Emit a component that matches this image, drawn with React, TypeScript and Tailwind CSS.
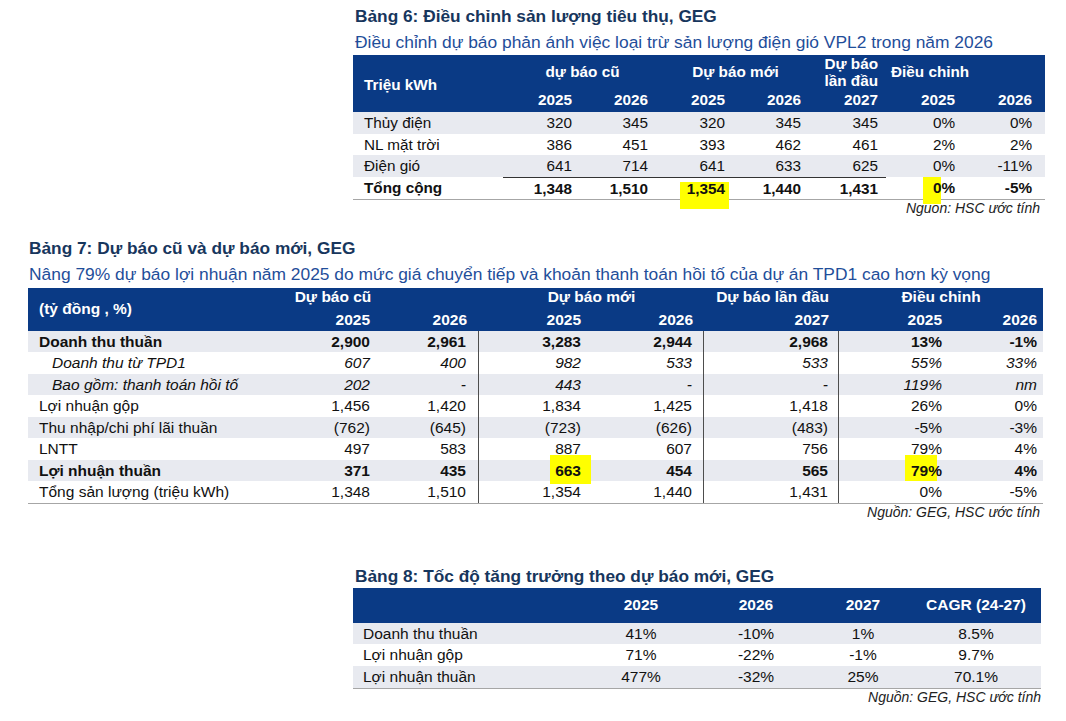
const FONT = "font-['Liberation_Sans',Arial,sans-serif]";
const NAVY = "bg-[#0a3a85]";

type Hl = { col: number; cls: string };
type Row = {
  label: string;
  vals: string[];
  shade?: boolean;
  bold?: boolean;
  italic?: boolean;
  hl?: Hl[];
};

// ---------- Bảng 6 ----------
const t6Grid = "grid grid-cols-[150px_77px_76px_77px_76px_77px_77px_82px]";
const t6Pads = ["pr-2", "pr-2", "pr-2", "pr-2", "pr-2", "pr-2", "pr-[13px]"];

const t6Rows: Row[] = [
  { label: "Thủy điện", vals: ["320", "345", "320", "345", "345", "0%", "0%"], shade: true },
  { label: "NL mặt trời", vals: ["386", "451", "393", "462", "461", "2%", "2%"] },
  { label: "Điện gió", vals: ["641", "714", "641", "633", "625", "0%", "-11%"], shade: true },
];

function Table6() {
  return (
    <div className="ml-[353px] w-[692px] pt-[6px]">
      <div className="pl-[2px] text-[17.3px] font-bold leading-5 text-[#17365d]">
        Bảng 6: Điều chỉnh sản lượng tiêu thụ, GEG
      </div>
      <div className="mt-[6px] pl-[2px] text-[17.4px] leading-5 text-[#1f4e9a]">
        Điều chỉnh dự báo phản ánh việc loại trừ sản lượng điện gió VPL2 trong năm 2026
      </div>

      <div className={`${t6Grid} mt-[3px] h-[57px] grid-rows-[34px_23px] ${NAVY} text-[15.3px] font-bold text-white`}>
        <div className="row-span-2 flex items-center pl-[11px] pt-[3px]">Triệu kWh</div>
        <div className="col-span-2 flex items-center justify-center pl-[6px]">dự báo cũ</div>
        <div className="col-span-2 flex items-center justify-center pl-[6px]">Dự báo mới</div>
        <div className="flex items-center justify-end pr-2 text-right leading-[17px]">
          Dự báo
          <br />
          lần đầu
        </div>
        <div className="col-span-2 flex items-center pl-[5px]">Điều chỉnh</div>
        {["2025", "2026", "2025", "2026", "2027", "2025", "2026"].map((y, i) => (
          <div key={i} className={`flex items-center justify-end ${t6Pads[i]}`}>
            {y}
          </div>
        ))}
      </div>

      {t6Rows.map((r) => (
        <div key={r.label} className={`${t6Grid} h-[21.5px] text-[15.3px] leading-[21.5px] ${r.shade ? "bg-[#e8eaf0]" : ""}`}>
          <div className="pl-[11px]">{r.label}</div>
          {r.vals.map((v, i) => (
            <div key={i} className={`text-right ${t6Pads[i]}`}>
              {v}
            </div>
          ))}
        </div>
      ))}

      {/* total row */}
      <div className={`${t6Grid} h-[23px] border-b border-[#a6a6a6] text-[15.3px] font-bold leading-[22px]`}>
        <div className="pl-[11px]">Tổng cộng</div>
        <div className="border-t border-[#333] pr-2 text-right">1,348</div>
        <div className="border-t border-[#333] pr-2 text-right">1,510</div>
        <div className="relative border-t border-[#333] pr-2 text-right">
          <div className="absolute left-[24px] top-[4px] h-[27px] w-[49px] bg-[#ffff00]" />
          <span className="relative">1,354</span>
        </div>
        <div className="border-t border-[#333] pr-2 text-right">1,440</div>
        <div className="border-t border-[#333] pr-2 text-right">1,431</div>
        <div className="relative pr-2 text-right">
          <div className="absolute left-[37px] top-0 h-[27px] w-[18px] bg-[#ffff00]" />
          <span className="relative">0%</span>
        </div>
        <div className="pr-[13px] text-right">-5%</div>
      </div>

      <div className="pr-[5px] text-right text-[14px] italic leading-4 text-[#222]">Nguồn: HSC ước tính</div>
    </div>
  );
}

// ---------- Bảng 7 ----------
const t7Grid = "grid grid-cols-[260px_90px_101px_111px_114px_135px_111px_93px]";
const t7Pads = ["pr-2", "pr-[12px]", "pr-[9px]", "pr-[11px]", "pr-[10px]", "pr-2", "pr-[6px]"];
const t7Lines = ["", "border-r border-[#4d4d4d]", "", "border-r border-[#4d4d4d]", "border-r border-[#4d4d4d]", "", ""];

const t7Rows: Row[] = [
  { label: "Doanh thu thuần", vals: ["2,900", "2,961", "3,283", "2,944", "2,968", "13%", "-1%"], shade: true, bold: true },
  { label: "Doanh thu từ TPD1", vals: ["607", "400", "982", "533", "533", "55%", "33%"], italic: true },
  { label: "Bao gồm: thanh toán hồi tố", vals: ["202", "-", "443", "-", "-", "119%", "nm"], shade: true, italic: true },
  { label: "Lợi nhuận gộp", vals: ["1,456", "1,420", "1,834", "1,425", "1,418", "26%", "0%"] },
  { label: "Thu nhập/chi phí lãi thuần", vals: ["(762)", "(645)", "(723)", "(626)", "(483)", "-5%", "-3%"], shade: true },
  { label: "LNTT", vals: ["497", "583", "887", "607", "756", "79%", "4%"] },
  {
    label: "Lợi nhuận thuần",
    vals: ["371", "435", "663", "454", "565", "79%", "4%"],
    shade: true,
    bold: true,
    hl: [
      { col: 2, cls: "left-[71px] top-[-5px] h-[29px] w-[41px]" },
      { col: 5, cls: "left-[66px] top-[-5px] h-[26px] w-[32px]" },
    ],
  },
  { label: "Tổng sản lượng (triệu kWh)", vals: ["1,348", "1,510", "1,354", "1,440", "1,431", "0%", "-5%"] },
];

function Table7() {
  return (
    <div className="ml-[28px] mt-[22px] w-[1015px]">
      <div className="pl-[1px] text-[17.3px] font-bold leading-5 text-[#17365d]">Bảng 7: Dự báo cũ và dự báo mới, GEG</div>
      <div className="mt-[6px] pl-[1px] text-[17.4px] leading-5 text-[#1f4e9a]">
        Nâng 79% dự báo lợi nhuận năm 2025 do mức giá chuyển tiếp và khoản thanh toán hồi tố của dự án TPD1 cao hơn kỳ vọng
      </div>

      <div className={`${t7Grid} mt-[4px] h-[43px] grid-rows-[21px_22px] ${NAVY} text-[15.5px] font-bold text-white`}>
        <div className="row-span-2 flex items-center pl-[11px]">(tỷ đồng , %)</div>
        <div className="flex items-end justify-center">Dự báo cũ</div>
        <div />
        <div className="col-span-2 flex items-end justify-center">Dự báo mới</div>
        <div className="flex items-end justify-end pr-[10px]">Dự báo lần đầu</div>
        <div className="col-span-2 flex items-end justify-center">Điều chỉnh</div>
        {["2025", "2026", "2025", "2026", "2027", "2025", "2026"].map((y, i) => (
          <div key={i} className={`flex items-center justify-end ${t7Pads[i]}`}>
            {y}
          </div>
        ))}
      </div>

      <div className="border-b border-[#a6a6a6]">
        {t7Rows.map((r) => (
          <div
            key={r.label}
            className={`${t7Grid} h-[21.5px] text-[15.5px] leading-[21.5px] ${r.shade ? "bg-[#e8eaf0]" : ""} ${r.bold ? "font-bold" : ""} ${r.italic ? "italic" : ""}`}
          >
            <div className={r.italic ? "pl-[24px]" : "pl-[11px]"}>{r.label}</div>
            {r.vals.map((v, i) => {
              const h = r.hl?.find((x) => x.col === i);
              return (
                <div key={i} className={`relative text-right ${t7Pads[i]} ${t7Lines[i]}`}>
                  {h && <div className={`absolute bg-[#ffff00] ${h.cls}`} />}
                  <span className="relative">{v}</span>
                </div>
              );
            })}
          </div>
        ))}
      </div>

      <div className="pr-[3px] text-right text-[14px] italic leading-4 text-[#222]">Nguồn: GEG, HSC ước tính</div>
    </div>
  );
}

// ---------- Bảng 8 ----------
const t8Grid = "grid grid-cols-[232px_112px_118px_96px_130px]";

const t8Rows: Row[] = [
  { label: "Doanh thu thuần", vals: ["41%", "-10%", "1%", "8.5%"], shade: true },
  { label: "Lợi nhuận gộp", vals: ["71%", "-22%", "-1%", "9.7%"] },
  { label: "Lợi nhuận thuần", vals: ["477%", "-32%", "25%", "70.1%"], shade: true },
];

function Table8() {
  return (
    <div className="ml-[353px] mt-[46px] w-[688px]">
      <div className="pl-[2px] text-[17.3px] font-bold leading-5 text-[#17365d]">
        Bảng 8: Tốc độ tăng trưởng theo dự báo mới, GEG
      </div>

      <div className={`${t8Grid} mt-[2px] h-[35px] items-center ${NAVY} text-[15.5px] font-bold text-white`}>
        <div />
        <div className="text-center">2025</div>
        <div className="text-center">2026</div>
        <div className="text-center">2027</div>
        <div className="text-center">CAGR (24-27)</div>
      </div>

      <div className="border-b border-[#a6a6a6]">
        {t8Rows.map((r) => (
          <div key={r.label} className={`${t8Grid} h-[21.7px] text-[15.5px] leading-[21.7px] ${r.shade ? "bg-[#e8eaf0]" : ""}`}>
            <div className="pl-[10px]">{r.label}</div>
            {r.vals.map((v, i) => (
              <div key={i} className="text-center">
                {v}
              </div>
            ))}
          </div>
        ))}
      </div>

      <div className="text-right text-[14px] italic leading-4 text-[#222]">Nguồn: GEG, HSC ước tính</div>
    </div>
  );
}

export default function App() {
  return (
    <div className={`${FONT} min-h-[721px] w-[1066px] bg-white text-[#111]`}>
      <Table6 />
      <Table7 />
      <Table8 />
    </div>
  );
}
